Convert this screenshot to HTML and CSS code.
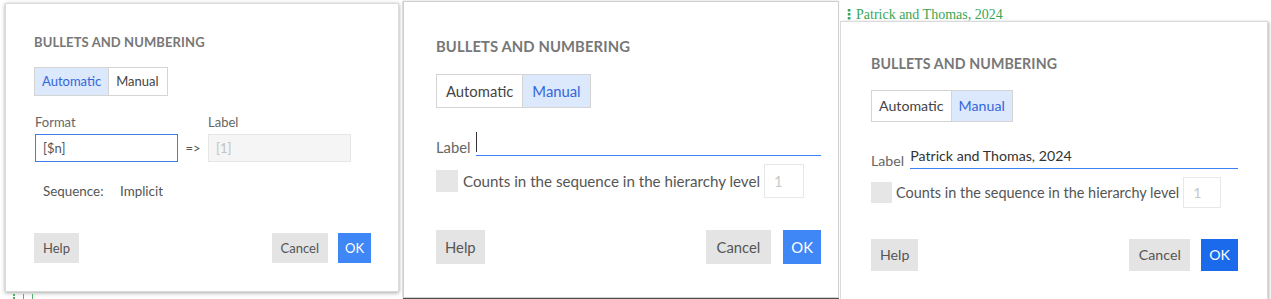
FILE: index.html
```html
<!doctype html>
<html lang="en">
<head>
    <meta charset="utf-8">
    <title>Bullets and numbering</title>
    <meta name="viewport" content="width=device-width, initial-scale=1.0">
    <link rel="stylesheet" href="styles.css">
</head>
<body>
    <div class="strip">
        <section class="panel panel-one">
            <div class="dialog dlg-auto">
                <h2 class="dlg-title">BULLETS AND NUMBERING</h2>
                <div class="seg">
                    <span class="seg-item is-active">Automatic</span>
                    <span class="seg-item">Manual</span>
                </div>
                <div class="format-row">
                    <div class="field">
                        <span class="field-label">Format</span>
                        <div class="box is-focus">[$n]</div>
                    </div>
                    <span class="arrow">=&gt;</span>
                    <div class="field">
                        <span class="field-label">Label</span>
                        <div class="box is-disabled">[1]</div>
                    </div>
                </div>
                <div class="sequence">
                    <span class="sequence-key">Sequence:</span>
                    <span>Implicit</span>
                </div>
                <div class="actions">
                    <button class="btn">Help</button>
                    <span class="spacer"></span>
                    <button class="btn btn-cancel">Cancel</button>
                    <button class="btn btn-primary">OK</button>
                </div>
            </div>
            <div class="under-marks"><i class="dots"></i><i></i><i></i></div>
        </section>

        <section class="panel panel-two">
            <div class="dialog dlg-manual dlg-m1">
                <h2 class="dlg-title">BULLETS AND NUMBERING</h2>
                <div class="seg">
                    <span class="seg-item">Automatic</span>
                    <span class="seg-item is-active">Manual</span>
                </div>
                <div class="label-row">
                    <span class="field-label">Label</span>
                    <div class="line-input"><span class="caret"></span></div>
                </div>
                <div class="check-row">
                    <span class="check"></span>
                    <span class="check-text">Counts in the sequence in the hierarchy level</span>
                    <span class="num">1</span>
                </div>
                <div class="actions">
                    <button class="btn">Help</button>
                    <span class="spacer"></span>
                    <button class="btn btn-cancel">Cancel</button>
                    <button class="btn btn-primary">OK</button>
                </div>
            </div>
        </section>

        <section class="panel panel-three">
            <div class="cite-peek"><span class="cite-dots">&#8942;</span>Patrick and Thomas, 2024</div>
            <div class="dialog dlg-manual dlg-m2">
                <h2 class="dlg-title">BULLETS AND NUMBERING</h2>
                <div class="seg">
                    <span class="seg-item">Automatic</span>
                    <span class="seg-item is-active">Manual</span>
                </div>
                <div class="label-row">
                    <span class="field-label">Label</span>
                    <div class="line-input">Patrick and Thomas, 2024</div>
                </div>
                <div class="check-row">
                    <span class="check"></span>
                    <span class="check-text">Counts in the sequence in the hierarchy level</span>
                    <span class="num">1</span>
                </div>
                <div class="actions">
                    <button class="btn">Help</button>
                    <span class="spacer"></span>
                    <button class="btn btn-cancel">Cancel</button>
                    <button class="btn btn-primary">OK</button>
                </div>
            </div>
        </section>
    </div>
</body>
</html>
```

FILE: styles.css
```css
html, body {
    margin: 0;
    padding: 0;
    background: #fff;
    overflow: hidden;
}
body {
    font-family: Lato, 'Liberation Sans', sans-serif;
    color: #555;
}
.strip {
    display: flex;
    width: 1271px;
    height: 299px;
}
.panel {
    flex: none;
    height: 299px;
    overflow: hidden;
}
.panel-one { width: 402px; }
.panel-two { width: 438px; }
.panel-three { width: 431px; }

/* dialog shell */
.dialog {
    box-sizing: border-box;
    display: flex;
    flex-direction: column;
    align-items: flex-start;
    background: #fff;
    border: 1px solid #dadada;
}
.dlg-title {
    margin: 0;
    font-weight: 700;
    color: #777;
    letter-spacing: 0.1px;
}
.seg {
    display: flex;
    border: 1px solid #d4d4d4;
}
.seg-item {
    color: #444;
    background: #fff;
}
.seg-item + .seg-item {
    border-left: 1px solid #d4d4d4;
}
.seg-item.is-active {
    background: #dce8fc;
    color: #3466da;
}
.field-label {
    color: #666;
}
.actions {
    display: flex;
    align-self: stretch;
}
.spacer { flex: 1; }
.btn {
    border: none;
    margin: 0;
    background: #e4e4e4;
    color: #555;
    font-family: inherit;
}
.btn-primary {
    background: #3f86f6;
    color: #fff;
}

/* panel one: automatic */
.dlg-auto {
    margin: 3px 0 0 5px;
    width: 394px;
    height: 289px;
    padding: 30px 27px 0 28px;
    font-size: 13px;
    line-height: 16px;
    box-shadow: 0 1px 4px rgba(0, 0, 0, 0.35);
}
.dlg-auto .dlg-title { font-size: 13px; }
.dlg-auto .seg { margin-top: 17px; }
.dlg-auto .seg-item { padding: 5px 7px; line-height: 17px; }
.dlg-auto .seg-item + .seg-item { padding-right: 8px; }
.format-row {
    display: flex;
    align-items: flex-end;
    margin-top: 18px;
    margin-left: 1px;
}
.field {
    display: flex;
    flex-direction: column;
}
.field .field-label { margin-bottom: 4px; }
.box {
    box-sizing: border-box;
    width: 143px;
    height: 28px;
    padding: 5px 7px;
    border: 1px solid #e6e6e6;
}
.box.is-focus {
    border-color: #3f7ee8;
    color: #555;
}
.box.is-disabled {
    background: #f5f5f5;
    color: #c2c2c2;
}
.arrow {
    width: 30px;
    text-align: center;
    line-height: 28px;
    color: #555;
}
.sequence {
    display: flex;
    margin-top: 21px;
    padding-left: 9px;
    font-size: 13.4px;
}
.sequence-key { width: 77px; }
.dlg-auto .actions { margin-top: 34px; }
.dlg-auto .btn {
    font-size: 13px;
    line-height: 16px;
    padding: 7px 9px;
}
.dlg-auto .btn-primary { margin-left: 10px; padding: 7px 7px; }

.under-marks {
    display: flex;
    gap: 8px;
    margin: 2px 0 0 13px;
    height: 5px;
}
.under-marks i {
    width: 1px;
    height: 5px;
    background: #4caf6a;
}
.under-marks i.dots {
    width: 2px;
    background: repeating-linear-gradient(#4caf6a 0 2px, transparent 2px 3px);
}

/* manual dialogs */
.label-row {
    display: flex;
    align-items: flex-end;
    align-self: stretch;
}
.line-input {
    flex: 1;
    border-bottom: 1px solid #3b82f6;
    color: #333;
}
.caret {
    display: block;
    width: 1px;
    background: #333;
}
.check-row {
    display: flex;
    align-items: center;
}
.check {
    background: #e6e6e6;
}
.num {
    box-sizing: border-box;
    border: 1px solid #e8e8e8;
    color: #c8c8c8;
}

/* panel two */
.dlg-m1 {
    margin: 1px 0 0 1px;
    width: 436px;
    height: 297px;
    padding: 35px 17px 0 32px;
    font-size: 14.8px;
    line-height: 18px;
    border-color: #cfcfcf;
    box-shadow: -1px 0 2px rgba(0, 0, 0, 0.2), 0 1px 0 #555;
}
.dlg-m1 .dlg-title { font-size: 14.8px; }
.dlg-m1 .seg { margin-top: 19px; }
.dlg-m1 .seg-item { padding: 6px 9px; line-height: 20px; }
.dlg-m1 .label-row { margin-top: 24px; }
.dlg-m1 .label-row .field-label { margin-right: 5px; }
.dlg-m1 .line-input { height: 23px; }
.dlg-m1 .caret { height: 20px; }
.dlg-m1 .check-row { margin-top: 8px; }
.dlg-m1 .check { width: 22px; height: 22px; margin-right: 5px; }
.dlg-m1 .check-text { font-size: 15.15px; }
.dlg-m1 .num { width: 40px; height: 34px; padding: 7px 9px; margin-left: 4px; }
.dlg-m1 .actions { margin-top: 32px; }
.dlg-m1 .btn {
    font-size: 14.8px;
    line-height: 18px;
    padding: 8px 9px;
}
.dlg-m1 .btn-cancel { padding: 8px 11px; }
.dlg-m1 .btn-primary { margin-left: 12px; padding: 8px 8px; }

/* panel three */
.cite-peek {
    box-sizing: border-box;
    height: 20px;
    padding: 6px 0 0 2px;
    font-family: 'Liberation Serif', serif;
    font-size: 14px;
    line-height: 16px;
    color: #3aa655;
    white-space: nowrap;
}
.cite-dots {
    display: inline-block;
    width: 11px;
    margin-right: 3px;
    text-align: center;
    font-family: 'DejaVu Sans', sans-serif;
    font-weight: 700;
}
.dlg-m2 {
    margin: 1px 0 0 0;
    width: 428px;
    height: 290px;
    padding: 33px 29px 0 30px;
    font-size: 14.2px;
    line-height: 17px;
    box-shadow: 1px 1px 3px rgba(0, 0, 0, 0.3);
}
.dlg-m2 .dlg-title { font-size: 14.2px; }
.dlg-m2 .seg { margin-top: 18px; }
.dlg-m2 .seg-item { padding: 6px 7px; line-height: 18px; }
.dlg-m2 .label-row { margin-top: 25px; }
.dlg-m2 .label-row .field-label { margin-right: 6px; }
.dlg-m2 .line-input { padding-bottom: 4px; }
.dlg-m2 .check-row { margin-top: 8px; }
.dlg-m2 .check { width: 21px; height: 21px; margin-right: 4px; }
.dlg-m2 .check-text { font-size: 14.45px; }
.dlg-m2 .num { width: 38px; height: 31px; padding: 6px 9px; margin-left: 4px; }
.dlg-m2 .actions { margin-top: 31px; }
.dlg-m2 .btn {
    font-size: 14.2px;
    line-height: 18px;
    padding: 7px 9px;
}
.dlg-m2 .btn-cancel { padding: 7px 9.5px; }
.dlg-m2 .btn-primary {
    margin-left: 11px;
    padding: 7px 8px;
    background: #1a6aeb;
}
```
